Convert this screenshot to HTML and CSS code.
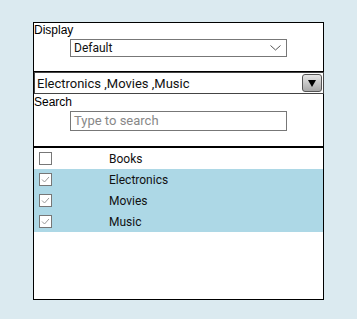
FILE: index.html
```html
<!DOCTYPE html>
<html>
<head>
  <title>Category filter</title>
  <link rel="stylesheet" href="styles.css">
</head>
<body>
  <div class="panel">
    <div class="section display-section">
      <div class="label">Display</div>
      <div class="select">
        <span>Default</span>
        <svg class="chevron" width="11" height="6" viewBox="0 0 11 6">
          <polyline points="0.5,0.5 5.5,5 10.5,0.5" fill="none" stroke="#555" stroke-width="1"/>
        </svg>
      </div>
    </div>

    <div class="combo">
      <span class="combo-text">Electronics ,Movies ,Music</span>
      <div class="combo-btn"><span class="arrow"></span></div>
    </div>

    <div class="section search-section">
      <div class="label">Search</div>
      <div class="search-input">Type to search</div>
    </div>

    <ul class="list">
      <li class="item">
        <span class="check"></span>
        <span class="name">Books</span>
      </li>
      <li class="item selected">
        <span class="check"><svg width="11" height="11" viewBox="0 0 11 11"><polyline points="2,5.5 4.5,8 9,3" fill="none" stroke="#999" stroke-width="1"/></svg></span>
        <span class="name">Electronics</span>
      </li>
      <li class="item selected">
        <span class="check"><svg width="11" height="11" viewBox="0 0 11 11"><polyline points="2,5.5 4.5,8 9,3" fill="none" stroke="#999" stroke-width="1"/></svg></span>
        <span class="name">Movies</span>
      </li>
      <li class="item selected">
        <span class="check"><svg width="11" height="11" viewBox="0 0 11 11"><polyline points="2,5.5 4.5,8 9,3" fill="none" stroke="#999" stroke-width="1"/></svg></span>
        <span class="name">Music</span>
      </li>
    </ul>
  </div>
</body>
</html>
```

FILE: styles.css
```css
body {
  margin: 0;
  padding: 22px 0 0 33px;
  background-color: #dbeaf0;
  font-family: Roboto, "Liberation Sans", sans-serif;
  color: #111;
}
.panel {
  width: 289px;
  height: 276px;
  border: 1px solid #000;
  background-color: #fff;
  display: flex;
  flex-direction: column;
}
.label {
  font-family: "Liberation Sans", Arial, sans-serif;
  font-size: 12px;
  line-height: 14px;
  color: #000;
}
.display-section {
  height: 48px;
  border-bottom: 1px solid #000;
}
.select {
  margin: 2px 0 0 36px;
  width: 207px;
  height: 16px;
  border: 1px solid #777;
  display: flex;
  align-items: center;
  justify-content: space-between;
  padding: 0 5px 0 3px;
  font-size: 12px;
}
.chevron {
  display: block;
}
.combo {
  height: 20px;
  border: 1px solid #444;
  margin-right: -1px;
  display: flex;
  align-items: center;
  justify-content: space-between;
  padding: 0 1px 0 2px;
}
.combo-text {
  font-size: 13px;
  margin-top: 1px;
}
.combo-btn {
  width: 18px;
  height: 16px;
  border: 1px solid #555;
  border-radius: 3px;
  background: linear-gradient(#e6e6e6, #a8a8a8);
  display: flex;
  align-items: center;
  justify-content: center;
}
.arrow {
  width: 0;
  height: 0;
  border-left: 4px solid transparent;
  border-right: 4px solid transparent;
  border-top: 7px solid #000;
  margin-top: 1px;
}
.search-section {
  height: 52px;
  border-bottom: 2px solid #000;
}
.search-section .label {
  margin-top: 1px;
}
.search-input {
  margin: 2px 0 0 36px;
  width: 212px;
  height: 18px;
  border: 1px solid #777;
  padding-left: 3px;
  font-size: 13px;
  line-height: 18px;
  color: #888;
}
.list {
  list-style: none;
  margin: 0;
  padding: 0;
}
.item {
  height: 21px;
  display: flex;
  align-items: center;
  font-size: 12px;
}
.item.selected {
  background-color: #add8e6;
}
.check {
  width: 11px;
  height: 11px;
  border: 1px solid #777;
  background-color: #fff;
  margin-left: 5px;
  display: flex;
}
.check svg {
  display: block;
}
.name {
  margin-left: 57px;
}
```
